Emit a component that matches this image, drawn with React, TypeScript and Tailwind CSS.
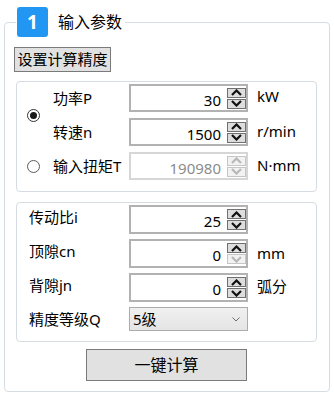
import React from 'react';

const font = "font-['Noto_Sans','Noto_Sans_CJK_SC',sans-serif]";

function Chevron({ up, color }: { up?: boolean; color: string }) {
  return (
    <svg width="11" height="7" viewBox="0 0 11 7" fill="none">
      <polyline
        points={up ? '1,6 5.5,1.5 10,6' : '1,1 5.5,5.5 10,1'}
        stroke={color}
        strokeWidth="2.2"
        strokeLinejoin="miter"
      />
    </svg>
  );
}

function SpinBox({
  value,
  disabled,
  downDisabled,
  tall,
}: {
  value: string;
  disabled?: boolean;
  downDisabled?: boolean;
  tall?: boolean;
}) {
  const btn = (on: boolean) =>
    on
      ? 'border-[#707070] bg-[#dddddd]'
      : 'border-[#c6c6c6] bg-[#f2f2f2]';
  return (
    <div
      className={`flex items-center w-[119px] ${tall ? 'h-[29px]' : 'h-[28px]'} border-2 bg-white ${
        disabled ? 'border-[#d6d6d6]' : 'border-[#b2b2b2]'
      }`}
    >
      <div
        className={`flex-1 text-right pr-[6px] text-[15px] leading-none pt-[4px] ${
          disabled ? 'text-[#8c8c8c]' : 'text-black'
        }`}
      >
        {value}
      </div>
      <div className="flex flex-col gap-[1px]">
        <div className={`w-[19px] h-[10px] border flex items-center justify-center ${btn(!disabled)}`}>
          <Chevron up color={disabled ? '#b8b8b8' : '#111'} />
        </div>
        <div
          className={`w-[19px] h-[10px] border flex items-center justify-center ${btn(!disabled && !downDisabled)}`}
        >
          <Chevron color={disabled || downDisabled ? '#b8b8b8' : '#111'} />
        </div>
      </div>
    </div>
  );
}

function Radio({ checked }: { checked?: boolean }) {
  return (
    <div
      className={`w-[13px] h-[13px] rounded-full border flex items-center justify-center bg-white ${
        checked ? 'border-[#333]' : 'border-[#5a5a5a]'
      }`}
    >
      {checked && <div className="w-[7px] h-[7px] rounded-full bg-[#1a1a1a]" />}
    </div>
  );
}

export default function App() {
  return (
    <div className={`w-[334px] h-[399px] bg-white text-black px-[4px] pt-[7px] ${font}`}>
      <fieldset className="border border-[#d5dce3] rounded-[4px] pl-[11px] pr-[12px] pt-[10px] pb-[10px] m-0">
        <legend className="px-[1px] pr-[3px]">
          <span className="flex items-center gap-[10px]">
            <span className="w-[31px] h-[30px] rounded-[3px] bg-[#2196f3] text-white font-bold text-[19px] flex items-center justify-center">
              1
            </span>
            <span className="text-[16px] leading-none">输入参数</span>
          </span>
        </legend>

        <button className="-ml-[2px] h-[25px] w-[97px] border border-[#7a7a7a] bg-[#e1e1e1] text-[15px] leading-none flex items-center justify-center">
          设置计算精度
        </button>

        {/* 输入方式 */}
        <div className="mt-[9px] border border-[#d5dce3] rounded-[4px] pl-[10px] pt-[2px] pb-[11px] grid grid-cols-[13px_89px_119px_1fr] gap-y-[6px] items-center text-[15px] leading-none">
          <div className="row-span-2">
            <Radio checked />
          </div>
          <div className="pl-[13px]">功率P</div>
          <SpinBox value="30" />
          <div className="pl-[9px] -mt-[4px]">kW</div>
          <div className="pl-[13px]">转速n</div>
          <SpinBox value="1500" />
          <div className="pl-[9px] -mt-[2px]">r/min</div>
          <Radio />
          <div className="pl-[13px]">输入扭矩T</div>
          <SpinBox value="190980" disabled />
          <div className="pl-[9px] -mt-[2px]">N·mm</div>
        </div>

        {/* 其他参数 */}
        <div className="mt-[10px] border border-[#d5dce3] rounded-[4px] pl-[12px] pt-[2px] pb-[10px] grid grid-cols-[100px_119px_1fr] gap-y-[5px] items-center text-[15px] leading-none">
          <div className="-mt-[4px]">传动比i</div>
          <SpinBox value="25" tall />
          <div />
          <div className="-mt-[4px]">顶隙cn</div>
          <SpinBox value="0" tall downDisabled />
          <div className="pl-[9px]">mm</div>
          <div className="-mt-[4px]">背隙jn</div>
          <SpinBox value="0" tall />
          <div className="pl-[9px] -mt-[2px]">弧分</div>
          <div>精度等级Q</div>
          <div className="w-[119px] h-[24px] border border-[#acacac] bg-gradient-to-b from-[#f0f0f0] to-[#e5e5e5] flex items-center pl-[3px] pr-[7px]">
            <span className="flex-1">5级</span>
            <svg width="8" height="5" viewBox="0 0 8 5" fill="none">
              <polyline points="0.5,0.5 4,4 7.5,0.5" stroke="#6d6d6d" strokeWidth="1" />
            </svg>
          </div>
          <div />
        </div>

        <div className="mt-[7px] flex justify-center">
          <button className="w-[161px] h-[32px] border border-[#7a7a7a] bg-[#e1e1e1] text-[16px] leading-none flex items-center justify-center">
            一键计算
          </button>
        </div>
      </fieldset>
    </div>
  );
}
